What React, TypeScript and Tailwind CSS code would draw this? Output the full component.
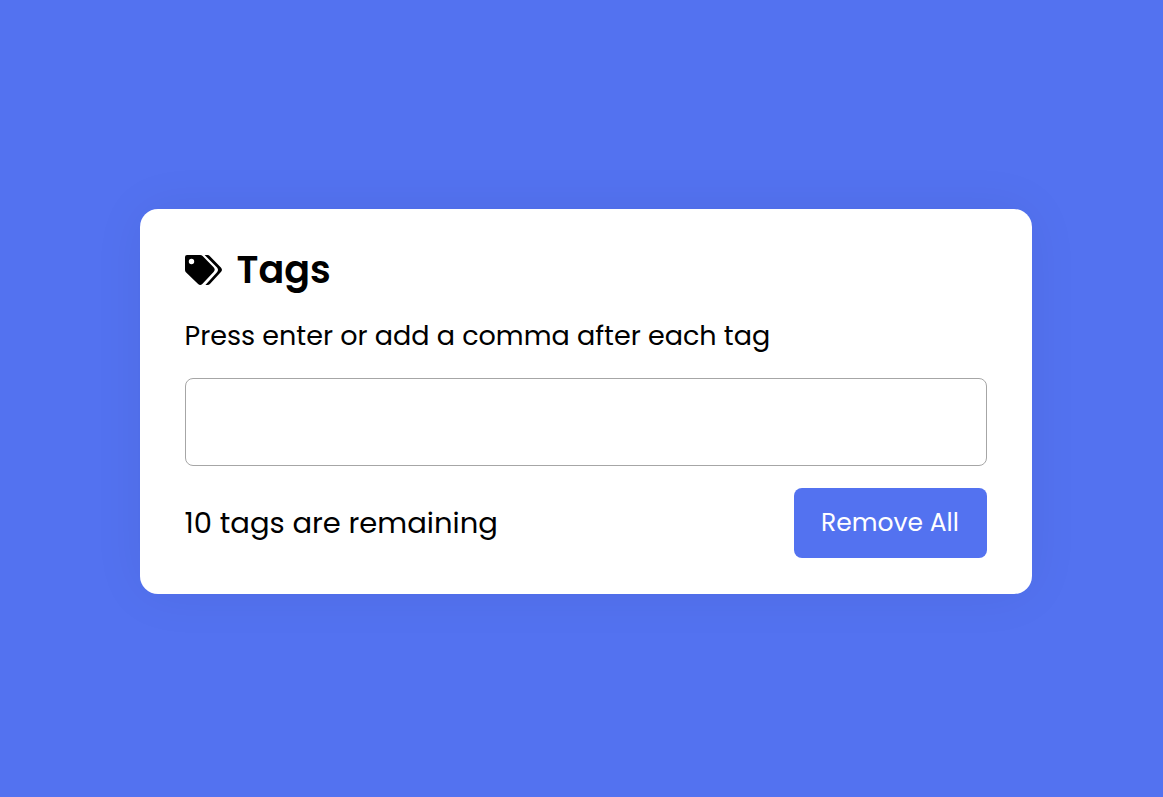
import { useState, type KeyboardEvent } from "react";

const MAX_TAGS = 10;

function TagsIcon() {
  return (
    <svg viewBox="0 0 37 30" className="h-[30px] w-[37px] shrink-0" fill="currentColor" aria-hidden="true">
      <path
        fillRule="evenodd"
        d="M2 0H15.2Q16.6 0 17.6 .9L28.6 12.2Q30.8 14.6 28.6 17L17.3 29Q15.2 31 13.1 29L.9 17.2Q0 16.3 0 15.1V2Q0 0 2 0ZM6.5 3.8A2.7 2.7 0 1 0 6.5 9.2A2.7 2.7 0 1 0 6.5 3.8Z"
      />
      <path d="M19.6 0H22.6Q23.8 0 24.7 .9L35.9 12.4Q38 14.7 35.9 17L24.9 29Q23.9 30 22.5 30H20.4L32 17.2Q34 14.8 32 12.4Z" />
    </svg>
  );
}

export default function App() {
  const [tags, setTags] = useState<string[]>([]);
  const [draft, setDraft] = useState("");

  const addTag = (text: string) => {
    const next = text.trim();
    if (next && !tags.includes(next) && tags.length < MAX_TAGS) setTags([...tags, next]);
    setDraft("");
  };

  const handleKeyDown = (event: KeyboardEvent<HTMLInputElement>) => {
    if (event.key === "Enter" || event.key === ",") {
      event.preventDefault();
      addTag(draft);
    }
  };

  return (
    <div className="flex min-h-screen items-center justify-center bg-[#5372f0] p-4 font-[Poppins,Inter,sans-serif] text-black">
      <main className="mt-[5px] ml-2 w-full max-w-[892px] rounded-[18px] bg-white px-[45px] pt-[37px] pb-9 shadow-[0_0_54px_rgba(0,0,0,0.06)]">
        <header className="flex items-center gap-[15px]">
          <TagsIcon />
          <h1 className="text-[38px] leading-[48px] font-semibold">Tags</h1>
        </header>
        <label htmlFor="tag-input" className="mt-[21px] block text-[27px] leading-[42px]">
          Press enter or add a comma after each tag
        </label>
        <div className="mt-[21px] flex min-h-[88px] flex-wrap items-center gap-2 rounded-lg border border-[#a6a6a6] p-3">
          {tags.map((tag) => (
            <span key={tag} className="rounded-md bg-gray-100 px-3 py-2 text-2xl">
              {tag}
            </span>
          ))}
          <input
            id="tag-input"
            type="text"
            value={draft}
            onChange={(event) => setDraft(event.target.value)}
            onKeyDown={handleKeyDown}
            className="h-[60px] min-w-0 flex-1 px-2 text-[27px] outline-none"
          />
        </div>
        <footer className="mt-[22px] flex flex-wrap items-center justify-between gap-4">
          <p className="text-[29px] leading-[42px]">{MAX_TAGS - tags.length} tags are remaining</p>
          <button
            type="button"
            onClick={() => setTags([])}
            className="h-[70px] w-[193px] rounded-lg bg-[#5372f0] text-[25px] text-white"
          >
            Remove All
          </button>
        </footer>
      </main>
    </div>
  );
}
